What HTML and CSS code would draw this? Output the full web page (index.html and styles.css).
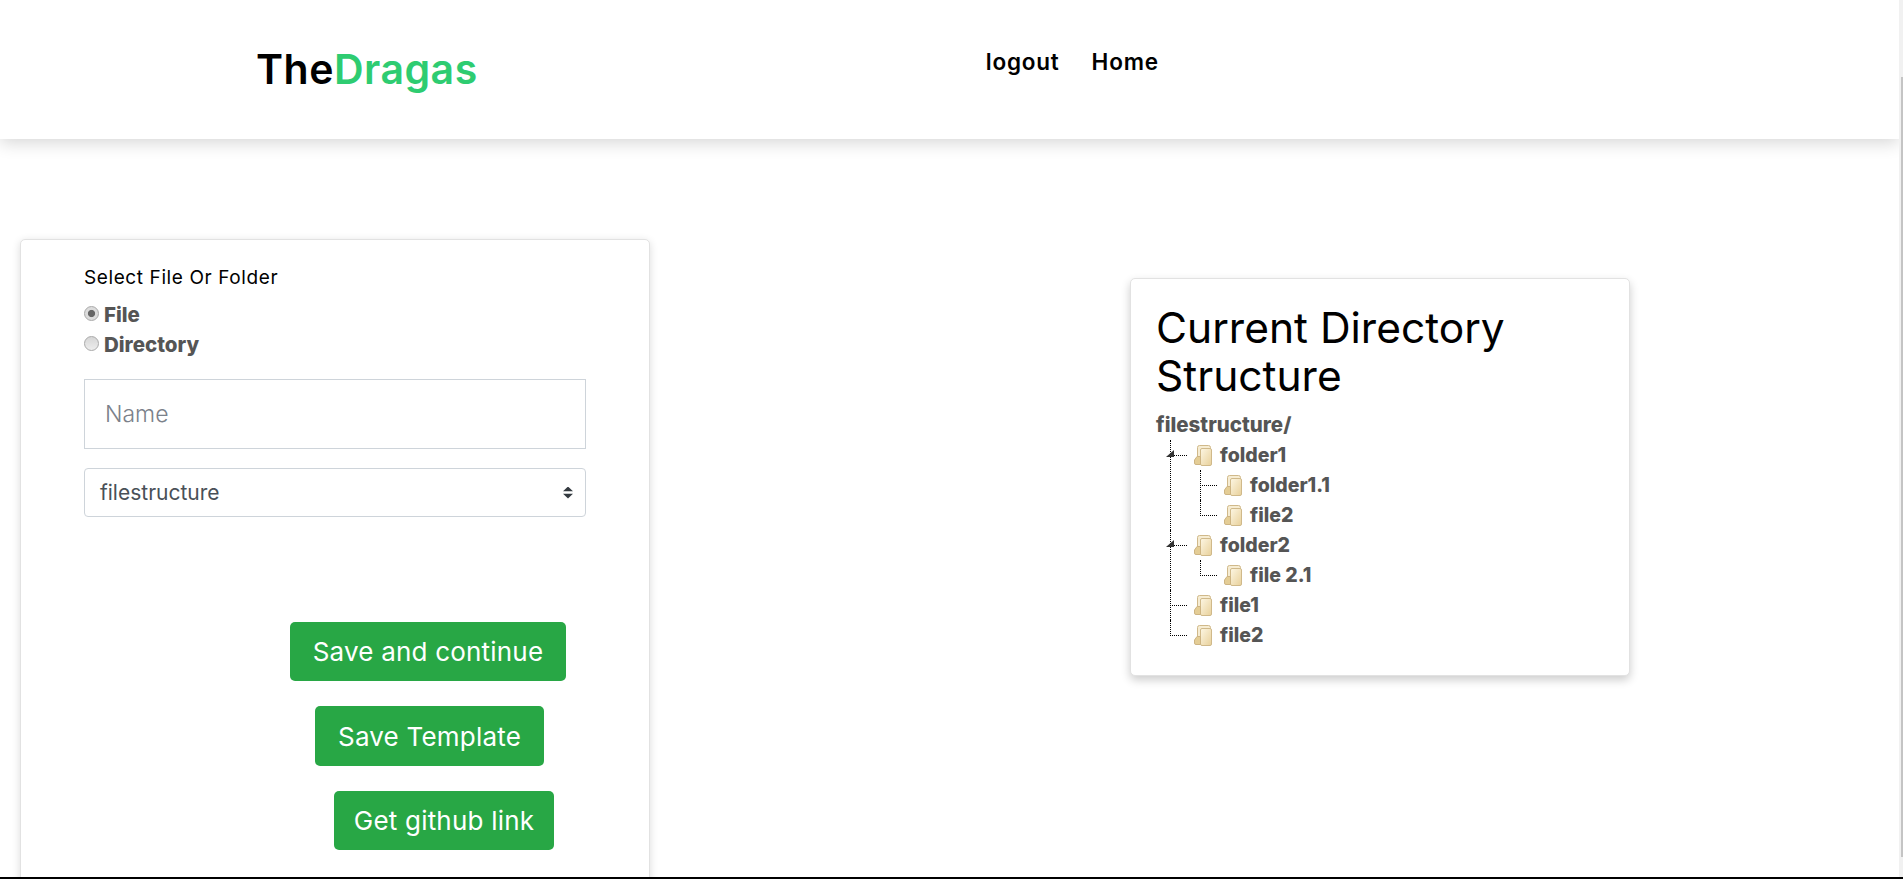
FILE: index.html
```html
<!DOCTYPE html>
<html lang="en">
<head>
  <meta charset="UTF-8">
  <meta name="viewport" content="width=device-width, initial-scale=1.0">
  <title>TheDragas</title>
  <link rel="stylesheet" href="styles.css">
</head>
<body>
  <svg class="defs" width="0" height="0">
    <defs>
      <linearGradient id="sheet" x1="0" y1="0" x2="1" y2="1">
        <stop offset="0" stop-color="#fdf7e4"/>
        <stop offset="1" stop-color="#e8d09a"/>
      </linearGradient>
      <symbol id="folder" viewBox="0 0 18 21">
        <rect x="3.500" y=".5" width="13" height="17" rx="2" fill="#f6ecd2" stroke="#d0b98a"/>
        <rect x="6.500" y="3.500" width="11" height="17" rx="1.500" fill="url(#sheet)" stroke="#d0b98a"/>
        <path d="M.5 15L3 11.500H6.500V19.500H2Q.5 19.500 .5 18Z" fill="#e4cd96" stroke="#cdb483"/>
      </symbol>
    </defs>
  </svg>

  <div id="window">
    <div id="page">
      <div id="content">
        <header id="header">
          <a class="logo" href="#">The<span>Dragas</span></a>
          <nav class="nav">
            <a href="#">logout</a>
            <a href="#">Home</a>
          </nav>
        </header>

        <main id="main">
          <section class="form-card">
            <p class="form-title">Select File Or Folder</p>
            <label class="radio"><input type="radio" name="kind" checked> File</label>
            <label class="radio"><input type="radio" name="kind"> Directory</label>
            <input class="name-input" type="text" placeholder="Name">
            <div class="select-box">
              <span>filestructure</span>
              <span class="select-arrows"></span>
            </div>
            <a class="btn btn-save" href="#">Save and continue</a>
            <a class="btn btn-template" href="#">Save Template</a>
            <a class="btn btn-github" href="#">Get github link</a>
          </section>

          <section class="tree-card">
            <h1>Current Directory Structure</h1>
            <div class="tree-root">filestructure/</div>
            <ul class="tree">
              <li>
                <span class="toggle"></span>
                <div class="row"><svg class="icon"><use href="#folder"/></svg>folder1</div>
                <ul class="tree sub">
                  <li><div class="row"><svg class="icon"><use href="#folder"/></svg>folder1.1</div></li>
                  <li><div class="row"><svg class="icon"><use href="#folder"/></svg>file2</div></li>
                </ul>
              </li>
              <li>
                <span class="toggle"></span>
                <div class="row"><svg class="icon"><use href="#folder"/></svg>folder2</div>
                <ul class="tree sub">
                  <li><div class="row"><svg class="icon"><use href="#folder"/></svg>file 2.1</div></li>
                </ul>
              </li>
              <li><div class="row"><svg class="icon"><use href="#folder"/></svg>file1</div></li>
              <li><div class="row"><svg class="icon"><use href="#folder"/></svg>file2</div></li>
            </ul>
          </section>
        </main>
      </div>

      <div id="scrollbar"><div class="thumb"></div></div>
    </div>
    <div id="strip"></div>
  </div>
</body>
</html>
```

FILE: styles.css
```css
*{
  margin: 0;
  padding: 0;
  box-sizing: border-box;
}
html,
body{
  height: 100%;
  overflow: hidden;
}
body{
  font-family: Inter, "Open Sans", sans-serif;
  color: #000;
  background: #fff;
}
a{
  text-decoration: none;
}
.defs{
  position: absolute;
}

#window{
  height: 879px;
  display: flex;
  flex-direction: column;
}
#page{
  flex: 1;
  min-height: 0;
  display: flex;
}
#content{
  flex: 1;
  min-width: 0;
  overflow: hidden;
}
#strip{
  height: 2px;
  background: #000;
}

#scrollbar{
  width: 4px;
  padding: 77px 0 20px 2px;
  background: #f1f1f1;
}
#scrollbar>.thumb{
  height: 100%;
  background: #c4c4c4;
}

#header{
  height: 139px;
  padding: 0 0 0 256px;
  display: flex;
  background: #fff;
  box-shadow: 0 4px 16px rgba(0,0,0,0.16);
  position: relative;
}
.logo{
  margin-top: 44px;
  font-size: 41px;
  line-height: 50px;
  font-weight: 600;
  letter-spacing: 0.5px;
  color: #000;
}
.logo>span{
  color: #2ecc71;
}
.nav{
  margin: 49px 0 0 508px;
  display: flex;
  gap: 32px;
}
.nav>a{
  font-size: 22.500px;
  line-height: 26px;
  font-weight: 600;
  letter-spacing: 0.8px;
  color: #000;
}

#main{
  display: flex;
  align-items: flex-start;
  padding: 100px 0 0 20px;
}

.form-card{
  width: 630px;
  height: 660px;
  padding: 25px 0 0 63px;
  background: #fff;
  border: 1px solid #e2e2e2;
  border-radius: 5px;
  box-shadow: 0 2px 8px rgba(0,0,0,0.14);
}
.form-title{
  font-size: 19px;
  line-height: 26px;
  letter-spacing: 0.6px;
  margin-bottom: 8px;
}
.radio{
  display: flex;
  align-items: center;
  gap: 5px;
  height: 30px;
  font-size: 20.500px;
  font-weight: 800;
  color: #555;
}
.radio>input{
  -webkit-appearance: none;
  appearance: none;
  width: 15px;
  height: 15px;
  margin: 0 0 2px;
  border: 1px solid #a9a9a9;
  border-radius: 50%;
  background: linear-gradient(#d6d6d6,#ededed);
}
.radio>input:checked{
  background: radial-gradient(circle,#666 0,#666 34%,#dcdcdc 44%);
}
.name-input{
  display: block;
  width: 502px;
  height: 70px;
  margin-top: 20px;
  padding: 0 20px;
  font: 300 23px Inter, sans-serif;
  border: 1px solid #ced4da;
  outline: none;
}
.name-input::placeholder{
  color: #7b818a;
}
.select-box{
  width: 502px;
  height: 49px;
  margin-top: 19px;
  padding: 0 12px 0 15px;
  display: flex;
  align-items: center;
  justify-content: space-between;
  font-size: 21px;
  color: #495057;
  border: 1px solid #ced4da;
  border-radius: 4px;
}
.select-arrows{
  width: 10px;
  height: 12px;
  display: block;
  background: linear-gradient(#343a40,#343a40);
  clip-path: polygon(50% 0, 100% 40%, 0 40%, 0 60%, 100% 60%, 50% 100%, 0 60%, 0 40%);
}

.btn{
  display: flex;
  align-items: center;
  justify-content: center;
  height: 59px;
  font-size: 26px;
  letter-spacing: 0.2px;
  color: #fff;
  background: #28a745;
  border-radius: 5px;
}
.btn-save{
  width: 276px;
  margin: 105px 0 0 206px;
}
.btn-template{
  width: 229px;
  margin: 25px 0 0 231px;
  height: 60px;
}
.btn-github{
  width: 220px;
  margin: 25px 0 0 250px;
}

.tree-card{
  width: 500px;
  height: 398px;
  margin: 39px 0 0 480px;
  padding: 25px 25px 0;
  background: #fff;
  border: 1px solid #e2e2e2;
  border-radius: 5px;
  box-shadow: 0 4px 10px rgba(0,0,0,0.2);
}
.tree-card>h1{
  width: 400px;
  font-size: 42.500px;
  line-height: 48px;
  font-weight: 400;
}
.tree-root{
  height: 30px;
  margin-top: 10px;
  line-height: 30px;
  font-size: 20.500px;
  font-weight: 800;
  color: #555;
}
.tree{
  margin-left: 14px;
  list-style: none;
  font-size: 19.500px;
  font-weight: 800;
  color: #555;
}
.tree.sub{
  margin-left: 6px;
}
.tree li{
  padding-left: 24px;
  position: relative;
}
.tree li::before{
  content: '';
  width: 16px;
  height: 15px;
  border-left: 1px dotted #000;
  border-bottom: 1px dotted #000;
  position: absolute;
  left: 0;
  top: 0;
}
.tree li:not(:last-child)::after{
  content: '';
  border-left: 1px dotted #000;
  position: absolute;
  left: 0;
  top: 15px;
  bottom: 0;
}
.toggle{
  width: 8px;
  height: 7px;
  background: #333;
  clip-path: polygon(100% 0, 100% 100%, 0 100%);
  position: absolute;
  left: -4px;
  top: 10px;
  z-index: 1;
}
.row{
  height: 30px;
  display: flex;
  align-items: center;
  gap: 8px;
}
.icon{
  width: 18px;
  height: 21px;
  flex: none;
}
```
